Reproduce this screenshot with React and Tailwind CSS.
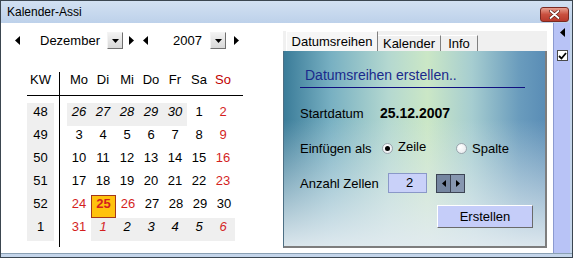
const RED = 'text-[#d41f1f]'

const weeks = [
  { kw: 48, days: [{ d: 26, o: 1 }, { d: 27, o: 1 }, { d: 28, o: 1 }, { d: 29, o: 1 }, { d: 30, o: 1 }, { d: 1 }, { d: 2, r: 1 }] },
  { kw: 49, days: [{ d: 3 }, { d: 4 }, { d: 5 }, { d: 6 }, { d: 7 }, { d: 8 }, { d: 9, r: 1 }] },
  { kw: 50, days: [{ d: 10 }, { d: 11 }, { d: 12 }, { d: 13 }, { d: 14 }, { d: 15 }, { d: 16, r: 1 }] },
  { kw: 51, days: [{ d: 17 }, { d: 18 }, { d: 19 }, { d: 20 }, { d: 21 }, { d: 22 }, { d: 23, r: 1 }] },
  { kw: 52, days: [{ d: 24, r: 1 }, { d: 25, t: 1 }, { d: 26, r: 1 }, { d: 27 }, { d: 28 }, { d: 29 }, { d: 30 }] },
  { kw: 1, days: [{ d: 31, r: 1 }, { d: 1, o: 1, r: 1 }, { d: 2, o: 1 }, { d: 3, o: 1 }, { d: 4, o: 1 }, { d: 5, o: 1 }, { d: 6, o: 1, r: 1 }] },
]

function TriLeft() {
  return (
    <svg width="5" height="9" viewBox="0 0 5 9" className="shrink-0">
      <path d="M5 0V9L0 4.5Z" fill="#000" />
    </svg>
  )
}

function TriRight() {
  return (
    <svg width="5" height="9" viewBox="0 0 5 9" className="shrink-0">
      <path d="M0 0V9L5 4.5Z" fill="#000" />
    </svg>
  )
}

function DropButton() {
  return (
    <div className="flex h-[17px] w-[16px] shrink-0 items-center justify-center border border-t-[#f4f4f4] border-l-[#f4f4f4] border-r-[#707070] border-b-[#707070] bg-[linear-gradient(to_bottom,#f2f2f2,#d8d8d8)]">
      <svg width="7" height="4" viewBox="0 0 7 4">
        <path d="M0 0H7L3.5 4Z" fill="#000" />
      </svg>
    </div>
  )
}

function Line() {
  return (
    <>
      <div className="w-[5px]" />
      <div className="w-px self-stretch bg-black" />
      <div className="w-[7px]" />
    </>
  )
}

function Calendar() {
  return (
    <div className="ml-[26px] mt-[23px] flex flex-col text-[13px] leading-[16px] text-black">
      <div className="flex h-[24px] w-[216px] border-b border-black">
        <div className="w-[27px] text-center">KW</div>
        <Line />
        {['Mo', 'Di', 'Mi', 'Do', 'Fr', 'Sa'].map((d) => (
          <div key={d} className="w-[24px] text-center">{d}</div>
        ))}
        <div className="w-[24px] text-center text-[#c00000]">So</div>
      </div>
      <div className="flex h-[7px]">
        <div className="w-[27px]" />
        <Line />
      </div>
      {weeks.map((w) => (
        <div key={w.kw} className="flex h-[23px]">
          <div className="w-[27px] bg-[#efefef] pt-[1px] text-center">{w.kw}</div>
          <Line />
          {w.days.map((c, i) =>
            c.t ? (
              <div key={i} className="w-[25px] border border-[#a3381c] bg-[#ffc20e] text-center font-bold text-[#d41f1f]">
                {c.d}
              </div>
            ) : (
              <div
                key={i}
                className={`w-[24px] pt-[1px] text-center ${c.o ? 'bg-[#efefef] italic' : ''} ${c.r ? RED : ''}`}
              >
                {c.d}
              </div>
            )
          )}
        </div>
      ))}
      <div className="flex h-[6px]">
        <div className="w-[27px]" />
        <Line />
      </div>
    </div>
  )
}

function Radio({ checked }) {
  return (
    <div className="flex h-[11px] w-[11px] shrink-0 items-center justify-center rounded-full border border-[#9aa4ac] bg-[radial-gradient(circle_at_35%_35%,#ffffff,#e4e8ec)]">
      {checked && <div className="h-[5px] w-[5px] rounded-full bg-black" />}
    </div>
  )
}

function TabPanel() {
  return (
    <div className="flex w-[264px] flex-col pt-[8px]">
      <div className="flex h-[20px] items-end bg-[#f0f0f0] pl-[3px] text-[13px] text-black">
        <div className="flex h-[20px] w-[92px] items-center justify-center border-l border-t border-r border-l-white border-t-white border-r-[#808080] bg-[#f6f6f6]">
          Datumsreihen
        </div>
        <div className="flex h-[16px] w-[63px] items-center justify-center border-r border-t border-t-white border-r-[#808080]">
          Kalender
        </div>
        <div className="flex h-[16px] w-[37px] items-center justify-center border-r border-t border-t-white border-r-[#808080]">
          Info
        </div>
      </div>
      <div className="flex h-[197px] flex-col border-l border-b-2 border-r-2 border-l-[#4d6f84] border-b-[#7d7d7d] border-r-[#7d7d7d] bg-[linear-gradient(to_bottom,rgba(255,255,255,0)_35%,rgba(226,235,240,0.95)_100%),linear-gradient(to_right,#3b7c99_0%,#78b0c2_18%,#b4d8d0_40%,#cbe7c6_55%,#a6cdd0_72%,#6a9cbd_90%,#5a8db6_100%)] pl-[16px] pt-[13px] text-[13px] text-black">
        <div className="h-[24px] w-[225px] border-b border-[#101080] pl-[5px] pt-[3px] text-[14px] leading-[17px] text-[#1a2a8c]">
          Datumsreihen erstellen..
        </div>
        <div className="mt-[17px] flex h-[17px] items-center">
          <div className="w-[80px]">Startdatum</div>
          <div className="text-[14px] font-bold">25.12.2007</div>
        </div>
        <div className="mt-[18px] flex h-[17px] items-center">
          <div className="w-[82px]">Einfügen als</div>
          <Radio checked />
          <div className="ml-[5px] mt-[-3px] w-[58px]">Zeile</div>
          <Radio />
          <div className="ml-[5px]">Spalte</div>
        </div>
        <div className="mt-[16px] flex h-[20px] items-center">
          <div className="w-[88px] pt-[2px]">Anzahl Zellen</div>
          <div className="flex h-[20px] w-[39px] items-center justify-center border border-[#8a98c8] bg-[#c9d1f9] pl-[4px]">2</div>
          <div className="ml-[9px] flex h-[19px]">
            <div className="flex w-[15px] items-center justify-center border border-[#3c4454] bg-[#7586a0]">
              <svg width="4" height="7" viewBox="0 0 4 7"><path d="M4 0V7L0 3.5Z" fill="#000" /></svg>
            </div>
            <div className="flex w-[14px] items-center justify-center border border-l-0 border-[#3c4454] bg-[#8797b0]">
              <svg width="4" height="7" viewBox="0 0 4 7"><path d="M0 0V7L4 3.5Z" fill="#000" /></svg>
            </div>
          </div>
        </div>
        <div className="ml-[137px] mt-[12px] flex h-[23px] w-[96px] items-center justify-center border border-t-white border-l-white border-r-[#6a6a6a] border-b-[#6a6a6a] bg-[#c5cdf9]">
          Erstellen
        </div>
      </div>
    </div>
  )
}

export default function App() {
  return (
    <div className="flex h-[258px] w-[573px] flex-col border border-[#3b4650] bg-white font-['Liberation_Sans',Arial,sans-serif]">
      <div className="flex h-[22px] shrink-0 items-center justify-between bg-[linear-gradient(to_bottom,#d2e1f2,#bdd1ea)] pl-[6px] pr-[3px]">
        <span className="text-[12px] text-black">Kalender-Assi</span>
        <div className="mt-[4px] flex h-[15px] w-[29px] items-center justify-center rounded-[3px] border border-[#7a2a22] bg-[linear-gradient(to_bottom,#e8a090,#c9503f_50%,#b83a2c)]">
          <svg width="11" height="9" viewBox="0 0 11 9">
            <path d="M1.5 1L9.5 8M9.5 1L1.5 8" stroke="#5a1a12" strokeWidth="3.2" strokeLinecap="round" />
            <path d="M1.5 1L9.5 8M9.5 1L1.5 8" stroke="#fff" strokeWidth="1.8" strokeLinecap="round" />
          </svg>
        </div>
      </div>
      <div className="flex h-[230px] shrink-0">
        <div className="flex w-[282px] flex-col">
          <div className="mt-[9px] flex h-[17px] items-center text-[13px] text-black">
            <div className="ml-[14px]"><TriLeft /></div>
            <div className="w-[87px] pl-[20px]">Dezember</div>
            <DropButton />
            <div className="ml-[6px]"><TriRight /></div>
            <div className="ml-[9px]"><TriLeft /></div>
            <div className="w-[62px] pl-[25px]">2007</div>
            <DropButton />
            <div className="ml-[8px]"><TriRight /></div>
          </div>
          <Calendar />
        </div>
        <TabPanel />
        <div className="w-[6px]" />
        <div className="flex w-[17px] flex-col items-center border-l border-[#8c9ad0] bg-[#b8c3f6] pt-[5px]">
          <svg width="5" height="9" viewBox="0 0 5 9"><path d="M5 0V9L0 4.5Z" fill="#000" /></svg>
          <div className="mt-[13px] flex h-[11px] w-[11px] items-center justify-center border border-[#4a4a4a] bg-white">
            <svg width="9" height="8" viewBox="0 0 9 8"><path d="M1 4L3.5 6.5L8 1" stroke="#000" strokeWidth="1.8" fill="none" /></svg>
          </div>
        </div>
        <div className="w-[2px] bg-[#c4d5ea]" />
      </div>
      <div className="flex-1 border-t border-[#8aa0b4] bg-[#c4d5ea]" />
    </div>
  )
}
